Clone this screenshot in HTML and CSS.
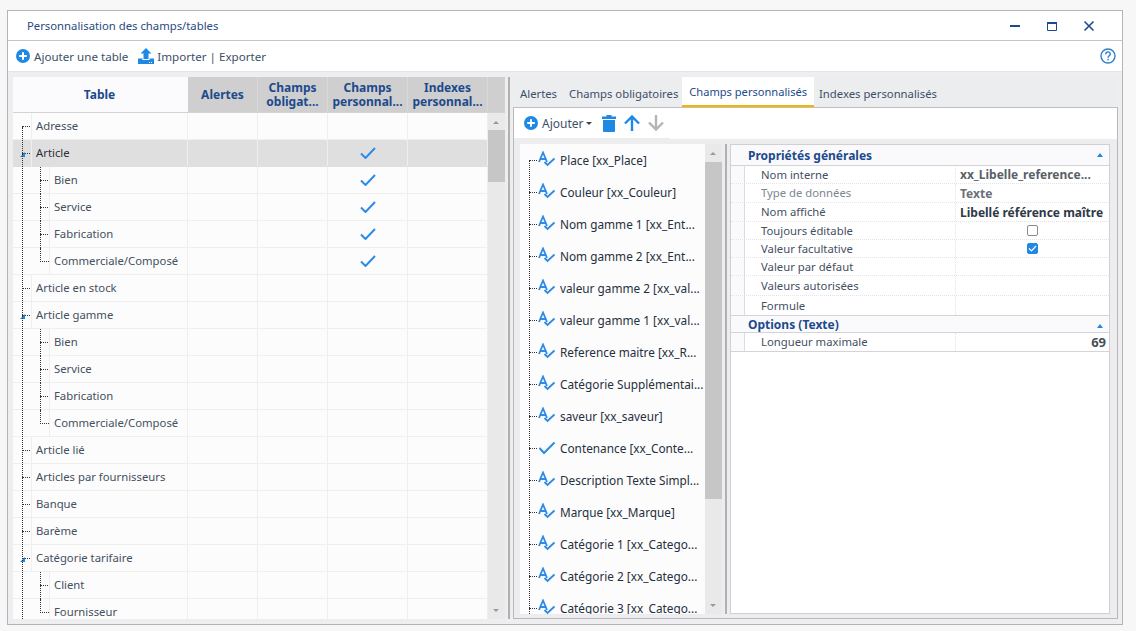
FILE: index.html
```html
<!DOCTYPE html>
<html lang="fr">
<head>
<meta charset="utf-8">
<title>Personnalisation des champs/tables</title>
<link rel="stylesheet" href="styles.css">
</head>
<body>
<svg class="defs" width="0" height="0" aria-hidden="true">
  <symbol id="i-plus" viewBox="0 0 14 14"><circle cx="7" cy="7" r="7" fill="#1e88e5"/><path d="M7 3.200v7.600M3.200 7h7.600" stroke="#fff" stroke-width="2"/></symbol>
  <symbol id="i-check" viewBox="0 0 16 12"><path d="M1 6.500l4.500 4.500L15 1" fill="none" stroke="#2b8be6" stroke-width="2"/></symbol>
  <symbol id="i-field" viewBox="0 0 18 18"><path d="M1 11L5 1.500 9 11M2.500 8h5" fill="none" stroke="#2b8be6" stroke-width="1.800"/><path d="M6.500 11l3 3 7-6.500" fill="none" stroke="#2b8be6" stroke-width="1.800"/></symbol>
</svg>
<main class="window">
  <header class="titlebar">
    <span class="title">Personnalisation des champs/tables</span>
    <div class="winctl">
      <svg width="12" height="12" viewBox="0 0 12 12"><rect x="1" y="5" width="10" height="2" fill="#1c4a8c"/></svg>
      <svg width="12" height="12" viewBox="0 0 12 12"><path d="M1.500 2.500h9v8h-9z" fill="none" stroke="#1c4a8c"/><rect x="1" y="2" width="10" height="2" fill="#1c4a8c"/></svg>
      <svg width="12" height="12" viewBox="0 0 12 12"><path d="M1.500 1.500l9 9M10.500 1.500l-9 9" stroke="#1c4a8c" stroke-width="1.600"/></svg>
    </div>
  </header>
  <nav class="toolbar">
    <svg class="ic14" width="14" height="14"><use href="#i-plus"/></svg>
    <span class="tb-label">Ajouter une table</span>
    <svg class="ic-up" width="16" height="16" viewBox="0 0 16 16"><path d="M8 0l5.500 5.500H10.500V11h-5V5.500H2.500z" fill="#1e88e5"/><path d="M0 10.500h4.500V12h7v-1.500H16V16H0z" fill="#1e88e5"/><path d="M11 14.500h1M13 14.500h1" stroke="#fff"/></svg>
    <span class="tb-label">Importer | Exporter</span>
    <svg class="help" width="16" height="16" viewBox="0 0 16 16"><circle cx="8" cy="8" r="7" fill="none" stroke="#2f80c8" stroke-width="1.400"/><path d="M5.800 6.200c0-3 4.500-3 4.500-.2 0 1.800-2.300 1.800-2.300 3.700" fill="none" stroke="#2f80c8" stroke-width="1.400"/><rect x="7.300" y="10.800" width="1.500" height="1.500" fill="#2f80c8"/></svg>
  </nav>
  <div class="content">
    <section class="table-panel">
      <div class="thead">
        <div class="th th-main">Table</div>
        <div class="th">Alertes</div>
        <div class="th">Champs obligat...</div>
        <div class="th">Champs personnal...</div>
        <div class="th">Indexes personnal...</div>
        <div class="th th-fill"></div>
      </div>
      <div class="tbody-wrap">
        <div class="tbody">
          <div class="vline vline-root"></div>
          <div class="row"><div class="name"><span class="hook"></span>Adresse</div><i></i><i></i><i></i><i></i></div>
          <div class="row selected"><div class="name"><span class="hook"></span><b class="arrow"></b>Article</div><i></i><i></i><i><svg width="16" height="12"><use href="#i-check"/></svg></i><i></i></div>
          <div class="row child"><div class="name"><span class="hook"></span>Bien</div><i></i><i></i><i><svg width="16" height="12"><use href="#i-check"/></svg></i><i></i></div>
          <div class="row child"><div class="name"><span class="hook"></span>Service</div><i></i><i></i><i><svg width="16" height="12"><use href="#i-check"/></svg></i><i></i></div>
          <div class="row child"><div class="name"><span class="hook"></span>Fabrication</div><i></i><i></i><i><svg width="16" height="12"><use href="#i-check"/></svg></i><i></i></div>
          <div class="row child last"><div class="name"><span class="hook"></span>Commerciale/Composé</div><i></i><i></i><i><svg width="16" height="12"><use href="#i-check"/></svg></i><i></i></div>
          <div class="row"><div class="name"><span class="hook"></span>Article en stock</div><i></i><i></i><i></i><i></i></div>
          <div class="row"><div class="name"><span class="hook"></span><b class="arrow"></b>Article gamme</div><i></i><i></i><i></i><i></i></div>
          <div class="row child"><div class="name"><span class="hook"></span>Bien</div><i></i><i></i><i></i><i></i></div>
          <div class="row child"><div class="name"><span class="hook"></span>Service</div><i></i><i></i><i></i><i></i></div>
          <div class="row child"><div class="name"><span class="hook"></span>Fabrication</div><i></i><i></i><i></i><i></i></div>
          <div class="row child last"><div class="name"><span class="hook"></span>Commerciale/Composé</div><i></i><i></i><i></i><i></i></div>
          <div class="row"><div class="name"><span class="hook"></span>Article lié</div><i></i><i></i><i></i><i></i></div>
          <div class="row"><div class="name"><span class="hook"></span>Articles par fournisseurs</div><i></i><i></i><i></i><i></i></div>
          <div class="row"><div class="name"><span class="hook"></span>Banque</div><i></i><i></i><i></i><i></i></div>
          <div class="row"><div class="name"><span class="hook"></span>Barème</div><i></i><i></i><i></i><i></i></div>
          <div class="row"><div class="name"><span class="hook"></span><b class="arrow"></b>Catégorie tarifaire</div><i></i><i></i><i></i><i></i></div>
          <div class="row child"><div class="name"><span class="hook"></span>Client</div><i></i><i></i><i></i><i></i></div>
          <div class="row child last"><div class="name"><span class="hook"></span>Fournisseur</div><i></i><i></i><i></i><i></i></div>
        </div>
        <div class="scrollbar sb-main"><span class="up"></span><span class="thumb"></span><span class="down"></span></div>
      </div>
    </section>
    <div class="splitter"></div>
    <section class="detail">
      <div class="tabs">
        <span class="tab">Alertes</span>
        <span class="tab">Champs obligatoires</span>
        <span class="tab active">Champs personnalisés</span>
        <span class="tab">Indexes personnalisés</span>
      </div>
      <div class="tabpage">
        <div class="subbar">
          <div class="subtools">
            <svg width="14" height="14"><use href="#i-plus"/></svg>
            <span class="add">Ajouter</span><b class="caret"></b>
            <svg class="trash" width="14" height="17" viewBox="0 0 14 17"><path d="M4.500 0h5v1.500H14V4H0V1.500h4.500z" fill="#1e88e5"/><path d="M1 5h12v11a1 1 0 0 1-1 1H2a1 1 0 0 1-1-1z" fill="#1e88e5"/></svg>
            <svg class="arr" width="16" height="16" viewBox="0 0 16 16"><path d="M8 2v14M1 8.500L8 1.500l7 7" fill="none" stroke="#1e88e5" stroke-width="2.400"/></svg>
            <svg class="arr" width="16" height="16" viewBox="0 0 16 16"><path d="M8 14V0M1 7.500l7 7 7-7" fill="none" stroke="#b4b4b4" stroke-width="2.400"/></svg>
          </div>
        </div>
        <div class="split">
          <div class="fields">
            <div class="field-list">
              <div class="vline vline-fields"></div>
              <div class="field"><span class="hook"></span><svg width="18" height="18"><use href="#i-field"/></svg>Place [xx_Place]</div>
              <div class="field"><span class="hook"></span><svg width="18" height="18"><use href="#i-field"/></svg>Couleur [xx_Couleur]</div>
              <div class="field"><span class="hook"></span><svg width="18" height="18"><use href="#i-field"/></svg>Nom gamme 1 [xx_Ent...</div>
              <div class="field"><span class="hook"></span><svg width="18" height="18"><use href="#i-field"/></svg>Nom gamme 2 [xx_Ent...</div>
              <div class="field"><span class="hook"></span><svg width="18" height="18"><use href="#i-field"/></svg>valeur gamme 2 [xx_val...</div>
              <div class="field"><span class="hook"></span><svg width="18" height="18"><use href="#i-field"/></svg>valeur gamme 1 [xx_val...</div>
              <div class="field"><span class="hook"></span><svg width="18" height="18"><use href="#i-field"/></svg>Reference maitre [xx_R...</div>
              <div class="field"><span class="hook"></span><svg width="18" height="18"><use href="#i-field"/></svg>Catégorie Supplémentai...</div>
              <div class="field"><span class="hook"></span><svg width="18" height="18"><use href="#i-field"/></svg>saveur [xx_saveur]</div>
              <div class="field"><span class="hook"></span><svg width="18" height="18" viewBox="0 0 18 18"><path d="M1.500 9L6 14 16.500 3.500" fill="none" stroke="#2b8be6" stroke-width="2"/></svg>Contenance [xx_Conte...</div>
              <div class="field"><span class="hook"></span><svg width="18" height="18"><use href="#i-field"/></svg>Description Texte Simpl...</div>
              <div class="field"><span class="hook"></span><svg width="18" height="18"><use href="#i-field"/></svg>Marque [xx_Marque]</div>
              <div class="field"><span class="hook"></span><svg width="18" height="18"><use href="#i-field"/></svg>Catégorie 1 [xx_Catego...</div>
              <div class="field"><span class="hook"></span><svg width="18" height="18"><use href="#i-field"/></svg>Catégorie 2 [xx_Catego...</div>
              <div class="field"><span class="hook"></span><svg width="18" height="18"><use href="#i-field"/></svg>Catégorie 3 [xx_Catego...</div>
            </div>
            <div class="scrollbar sb-fields"><span class="up"></span><span class="thumb"></span><span class="down"></span></div>
          </div>
          <div class="splitter inner"></div>
          <div class="props">
            <div class="group-head">Propriétés générales<b class="tri"></b></div>
            <div class="group group-a">
              <div class="prop"><span>Nom interne</span><span class="val">xx_Libelle_reference...</span></div>
              <div class="prop"><span class="muted">Type de données</span><span class="val muted">Texte</span></div>
              <div class="prop"><span>Nom affiché</span><span class="val dark">Libellé référence maître</span></div>
              <div class="prop"><span>Toujours éditable</span><span class="val center"><b class="cb"></b></span></div>
              <div class="prop"><span>Valeur facultative</span><span class="val center"><b class="cb on"><svg width="9" height="7" viewBox="0 0 9 7"><path d="M1 3.500l2.500 2.500L8 1" fill="none" stroke="#fff" stroke-width="1.200"/></svg></b></span></div>
              <div class="prop"><span>Valeur par défaut</span><span class="val"></span></div>
              <div class="prop"><span>Valeurs autorisées</span><span class="val"></span></div>
              <div class="prop"><span>Formule</span><span class="val"></span></div>
            </div>
            <div class="group-head second">Options (Texte)<b class="tri"></b></div>
            <div class="group group-b">
              <div class="prop"><span>Longueur maximale</span><span class="val right">69</span></div>
            </div>
          </div>
        </div>
      </div>
    </section>
  </div>
</main>
</body>
</html>
```
FILE: styles.css
```css
* { box-sizing: border-box; }
html, body { margin: 0; height: 100%; }
body {
  background: #f7f7f7;
  font-family: "Noto Sans", "Open Sans", sans-serif;
  font-size: 11.3px;
  color: #44505f;
  overflow: hidden;
  padding: 10px 13px 6px 7px;
}
.defs { position: absolute; }
svg { display: block; flex: none; }
.window {
  height: 615px;
  border: 1px solid #b4b4b8;
  background: #fff;
  display: flex;
  flex-direction: column;
}
.titlebar {
  height: 30px;
  flex: none;
  border-bottom: 1px solid #c4c4c8;
  display: flex;
  align-items: center;
  padding-left: 19px;
  color: #2a4a80;
}
.title { padding-bottom: 1px; }
.winctl {
  margin-left: auto;
  display: flex;
  gap: 25px;
  padding-right: 27px;
}
.toolbar {
  height: 30px;
  flex: none;
  display: flex;
  align-items: center;
  padding-left: 8px;
  padding-right: 6px;
  color: #3d4f69;
  font-size: 11.6px;
}
.tb-label { margin-left: 4px; margin-right: 8px; }
.ic-up { margin-top: -1px; margin-left: 2px; margin-right: -1px; }
.help { margin-left: auto; }
.content {
  flex: 1;
  min-height: 0;
  background: #eeeef0;
  border-top: 1px solid #e4e4e8;
  padding: 5px 4px 5px 5px;
  display: flex;
}
.table-panel {
  width: 492px;
  flex: none;
  display: flex;
  flex-direction: column;
  min-height: 0;
}
.thead {
  height: 36px;
  flex: none;
  display: grid;
  grid-template-columns: 175px 70px 70px 80px 80px 17px;
  background: #cfcfcf;
  border-bottom: 1px solid #d4d4d4;
  font-size: 12px;
}
.th {
  display: flex;
  align-items: center;
  justify-content: center;
  text-align: center;
  font-weight: 700;
  color: #1c4a8c;
  line-height: 14px;
  padding: 0 2px;
  border-right: 1px solid #d8d8d8;
  overflow: hidden;
}
.th-main { background: #fbfbfd; border-right: 0; padding-right: 4px; }
.th-fill { border-right: 0; }
.tbody-wrap { flex: 1; min-height: 0; display: flex; overflow: hidden; }
.tbody { width: 475px; flex: none; background: #fcfcfc; position: relative; overflow: hidden; }
.row {
  height: 27px;
  display: grid;
  grid-template-columns: 175px 70px 70px 80px 80px;
  border-bottom: 1px solid #efefef;
}
.row > i {
  display: flex;
  align-items: center;
  justify-content: center;
  border-right: 1px solid #efefef;
  font-style: normal;
}
.row.selected { background: #dfdfdf; color: #2a2f3a; border-bottom-color: #dfdfdf; }
.row.selected > i { border-right-color: #eeeeee; }
.name {
  position: relative;
  display: flex;
  align-items: center;
  padding-left: 23px;
  padding-bottom: 1px;
  white-space: nowrap;
  border-right: 1px solid #efefef;
}
.row.child .name { padding-left: 41px; }
.name::before {
  content: "";
  position: absolute;
  left: 18px;
  top: 0;
  bottom: -1px;
  border-left: 1px solid #efefef;
}
.row.child .name::before { left: 36px; }
.row.child .name::after {
  content: "";
  position: absolute;
  left: 27px;
  top: 0;
  height: 14px;
  border-left: 1px dotted #333;
}
.row.child:not(.last) .name::after { height: 27px; }
.hook {
  position: absolute;
  left: 9px;
  top: 13px;
  width: 8px;
  border-top: 1px dotted #333;
}
.row.child .hook { left: 27px; }
.row.last .hook { width: 9px; }
.arrow {
  position: absolute;
  left: 7px;
  top: 12px;
  width: 0;
  height: 0;
  border-style: solid;
  border-width: 0 0 5px 5px;
  border-color: transparent transparent #1e88e5 transparent;
}
.vline { position: absolute; border-left: 1px dotted #333; z-index: 1; }
.vline-root { left: 9px; top: 14px; bottom: 0; }
.scrollbar {
  width: 17px;
  flex: none;
  background: #e9e9e9;
  position: relative;
}
.thumb { position: absolute; left: 0; right: 0; background: #c6c6c6; }
.sb-main .thumb { top: 17px; height: 52px; }
.sb-fields .thumb { top: 18px; height: 337px; }
.up, .down {
  position: absolute;
  left: 5px;
  width: 0;
  height: 0;
  border-style: solid;
  border-color: transparent;
  border-width: 0 3px;
}
.up { top: 8px; border-bottom: 3px solid #999; border-top: 0; }
.down { bottom: 7px; border-top: 3px solid #999; border-bottom: 0; }
.splitter {
  width: 2px;
  flex: none;
  background: #b0b0b0;
  margin: 0 3px;
}
.detail { flex: 1; min-width: 0; display: flex; flex-direction: column; }
.tabs {
  height: 30px;
  flex: none;
  display: flex;
  align-items: center;
  padding-left: 2px;
  background: #ecedef;
}
.tab { padding: 3px 5px 0; color: #3d4f69; height: 30px; display: flex; align-items: center; margin-right: 2px; }
.tab.active {
  background: #fff;
  color: #1c4a8c;
  font-size: 11.1px;
  border-bottom: 2px solid #f5b400;
  padding: 1px 7px 0;
  margin-left: -3px;
  margin-right: 0;
}
.tabpage {
  flex: 1;
  min-height: 0;
  border: 1px solid #b8b8bc;
  border-top-color: #c0c0c4;
  display: flex;
  flex-direction: column;
  background: #ededf0;
}
.subbar {
  height: 31px;
  flex: none;
  background: #fff;
  color: #3d4f69;
  font-size: 12px;
}
.subtools {
  width: 156px;
  height: 31px;
  display: flex;
  align-items: center;
  padding-left: 10px;
  border-bottom: 1px solid #ececec;
}
.add { margin-left: 4px; }
.caret {
  margin-left: 2px;
  border-style: solid;
  border-width: 3px 3px 0;
  border-color: #444 transparent transparent;
}
.trash { margin-left: 10px; }
.arr { margin-left: 8px; }
.split { flex: 1; min-height: 0; display: flex; padding: 5px 7px 4px 6px; }
.fields { width: 202px; flex: none; display: flex; overflow: hidden; }
.field-list { width: 185px; flex: none; background: #fcfcfd; position: relative; overflow: hidden; color: #26303c; font-size: 11.8px; }
.field {
  height: 32px;
  display: flex;
  align-items: center;
  gap: 4px;
  padding-left: 18px;
  white-space: nowrap;
  position: relative;
}
.field .hook { left: 9px; top: 16px; width: 8px; }
.vline-fields { left: 9px; top: 16px; bottom: 0; }
.props {
  flex: 1;
  min-width: 0;
  background: #fff;
  border: 1px solid #d0d0d4;
  display: flex;
  flex-direction: column;
  color: #44505f;
}
.group-head {
  height: 21px;
  flex: none;
  display: flex;
  align-items: center;
  padding-left: 17px;
  font-weight: 700;
  font-size: 12px;
  color: #1c4a8c;
  background: #fafafc;
  border-bottom: 1px solid #d4d4d8;
  position: relative;
}
.group-head.second { height: 17px; }
.tri {
  position: absolute;
  right: 6px;
  top: 8px;
  border-style: solid;
  border-width: 0 3.500px 4px;
  border-color: transparent transparent #1e88e5;
}
.group { border-bottom: 1px solid #d4d4d8; background: #fff; display: grid; }
.group-a { grid-template-rows: 18px 19px 19px 18px 18px 18px 20px 19px; }
.group-b { grid-template-rows: 18px; }
.prop {
  display: grid;
  grid-template-columns: 13px 211px 1fr;
  align-items: center;
  border-bottom: 1px dotted #e4e4e4;
  background: linear-gradient(#fafafc, #fafafc) 0 0 / 13px 100% no-repeat;
  min-height: 0;
}
.prop:last-child { border-bottom: 0; }
.prop > span:first-child { grid-column: 2; padding-left: 16px; white-space: nowrap; line-height: 14px; border-left: 1px solid #dcdcdc; height: 100%; display: flex; align-items: center; }
.prop > .muted:first-child { color: #7d8590; }
.val {
  height: 100%;
  display: flex;
  align-items: center;
  padding-left: 4px;
  padding-right: 3px;
  font-weight: 700;
  font-size: 12px;
  white-space: nowrap;
  overflow: hidden;
  border-left: 1px dotted #e4e4e4;
  color: #5a5f68;
}
.val.muted { color: #6a6f78; }
.val.dark { color: #2f3947; }
.val.center { justify-content: center; padding-left: 0; padding-right: 0; }
.val.right { justify-content: flex-end; color: #4a4f58; font-size: 13px; }
.cb {
  width: 11px;
  height: 11px;
  border: 1px solid #8a8a8a;
  border-radius: 2px;
  display: flex;
  align-items: center;
  justify-content: center;
  background: #fff;
}
.cb.on { background: #1e88e5; border-color: #1e88e5; }
```
